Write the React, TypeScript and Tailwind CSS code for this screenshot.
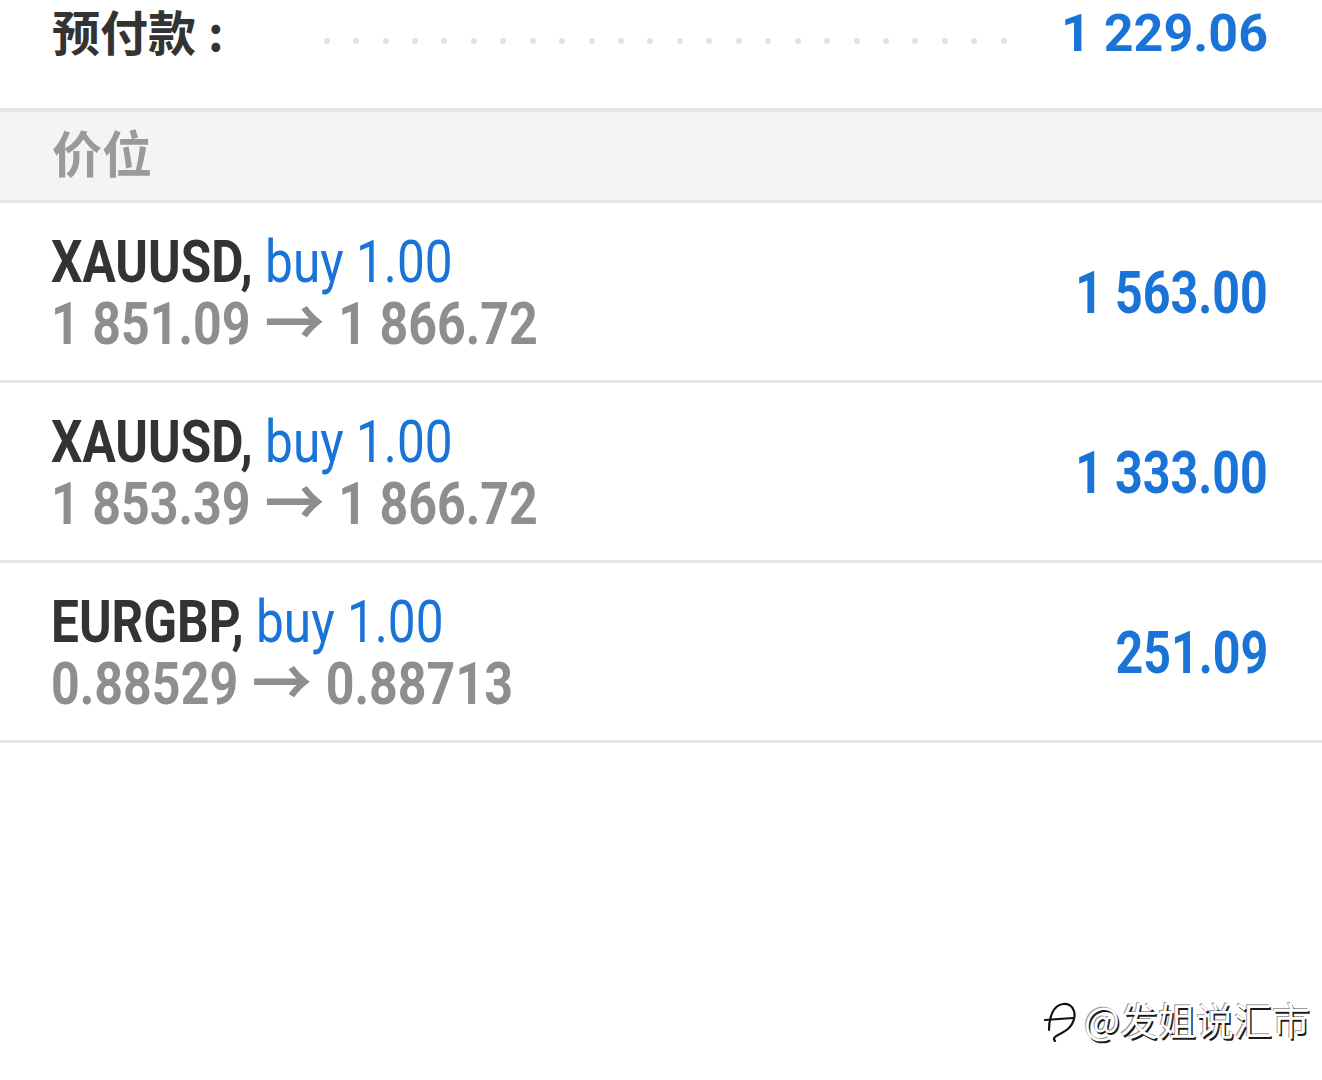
const blue = "text-[#1a74d8]";

type Position = {
  symbol: string;
  side: string;
  open: string;
  close: string;
  profit: string;
};

const positions: Position[] = [
  { symbol: "XAUUSD,", side: "buy 1.00", open: "1 851.09", close: "1 866.72", profit: "1 563.00" },
  { symbol: "XAUUSD,", side: "buy 1.00", open: "1 853.39", close: "1 866.72", profit: "1 333.00" },
  { symbol: "EURGBP,", side: "buy 1.00", open: "0.88529", close: "0.88713", profit: "251.09" },
];

function Row({ p }: { p: Position }) {
  return (
    <div className="flex h-[180px] items-center justify-between border-b-[3px] border-[#e6e6e6] pt-[2px] pl-[51px] pr-[54px]">
      <div className="text-[59px] leading-[62px]">
        <div className="inline-block origin-left scale-x-[0.84] whitespace-nowrap">
          <span className="font-bold text-[#333333]">{p.symbol}</span>{" "}
          <span className={blue}>{p.side}</span>
        </div>
        <div className="block">
          <div className="inline-flex origin-left scale-x-[0.85] items-baseline whitespace-nowrap font-bold text-[#8e8e8e]">
            <span>{p.open}</span>
            <span className="mx-[22px] inline-block origin-center scale-x-[1.2] scale-y-[1.1]">→</span>
            <span>{p.close}</span>
          </div>
        </div>
      </div>
      <div className={`inline-block origin-right scale-x-[0.82] whitespace-nowrap text-[59px] font-bold leading-[62px] ${blue}`}>
        {p.profit}
      </div>
    </div>
  );
}

export default function App() {
  const dots = Array.from({ length: 24 });
  return (
    <div
      className="relative min-h-[1080px] w-full overflow-hidden bg-white"
      style={{ fontFamily: 'Roboto, "Noto Sans CJK SC", sans-serif' }}
    >
      <div className="flex h-[108px] items-baseline pt-[6px] pl-[52px] pr-[54px]">
        <span className="text-[48px] font-bold leading-none text-[#333333]" style={{ fontFamily: '"Noto Sans CJK SC", sans-serif' }}>
          预付款<span className="ml-[12px]">:</span>
        </span>
        <div className="ml-[100px] mr-[54px] flex flex-1 self-start justify-between pt-[32px]">
          {dots.map((_, i) => (
            <span key={i} className="h-[6px] w-[6px] rounded-full bg-[#e2e2e2]" />
          ))}
        </div>
        <span className={`text-[52px] font-bold leading-none ${blue}`}>1 229.06</span>
      </div>

      <div className="h-[4px] bg-[#e6e6e6]" />
      <div className="flex h-[91px] items-start border-b-[3px] border-[#e6e6e6] bg-[#f4f4f4] pt-[14px] pl-[52px]">
        <span className="text-[50px] font-bold leading-none text-[#9a9a9a]" style={{ fontFamily: '"Noto Sans CJK SC", sans-serif' }}>
          价位
        </span>
      </div>

      {positions.map((p, i) => (
        <Row key={i} p={p} />
      ))}

      <div className="absolute bottom-[38px] right-[12px] flex items-center gap-[4px]">
        <svg width="36" height="46" viewBox="0 0 36 46" fill="none">
          <path
            d="M5 34 C5 22 9 9 19 8 C28 7 32 15 30 23 C28 32 20 36 14 39 C10 41 9 43 11 45"
            stroke="#111"
            strokeWidth="2.2"
            strokeLinecap="round"
          />
          <path d="M1 24 L29 22" stroke="#111" strokeWidth="2.2" strokeLinecap="round" />
        </svg>
        <span
          className="text-[38px] leading-none text-white [text-shadow:1.5px_1.5px_0_#1a1a1a,-1px_-1px_0_#9a9a9a]"
          style={{ fontFamily: '"Noto Sans CJK SC", sans-serif' }}
        >
          @发姐说汇市
        </span>
      </div>
    </div>
  );
}
